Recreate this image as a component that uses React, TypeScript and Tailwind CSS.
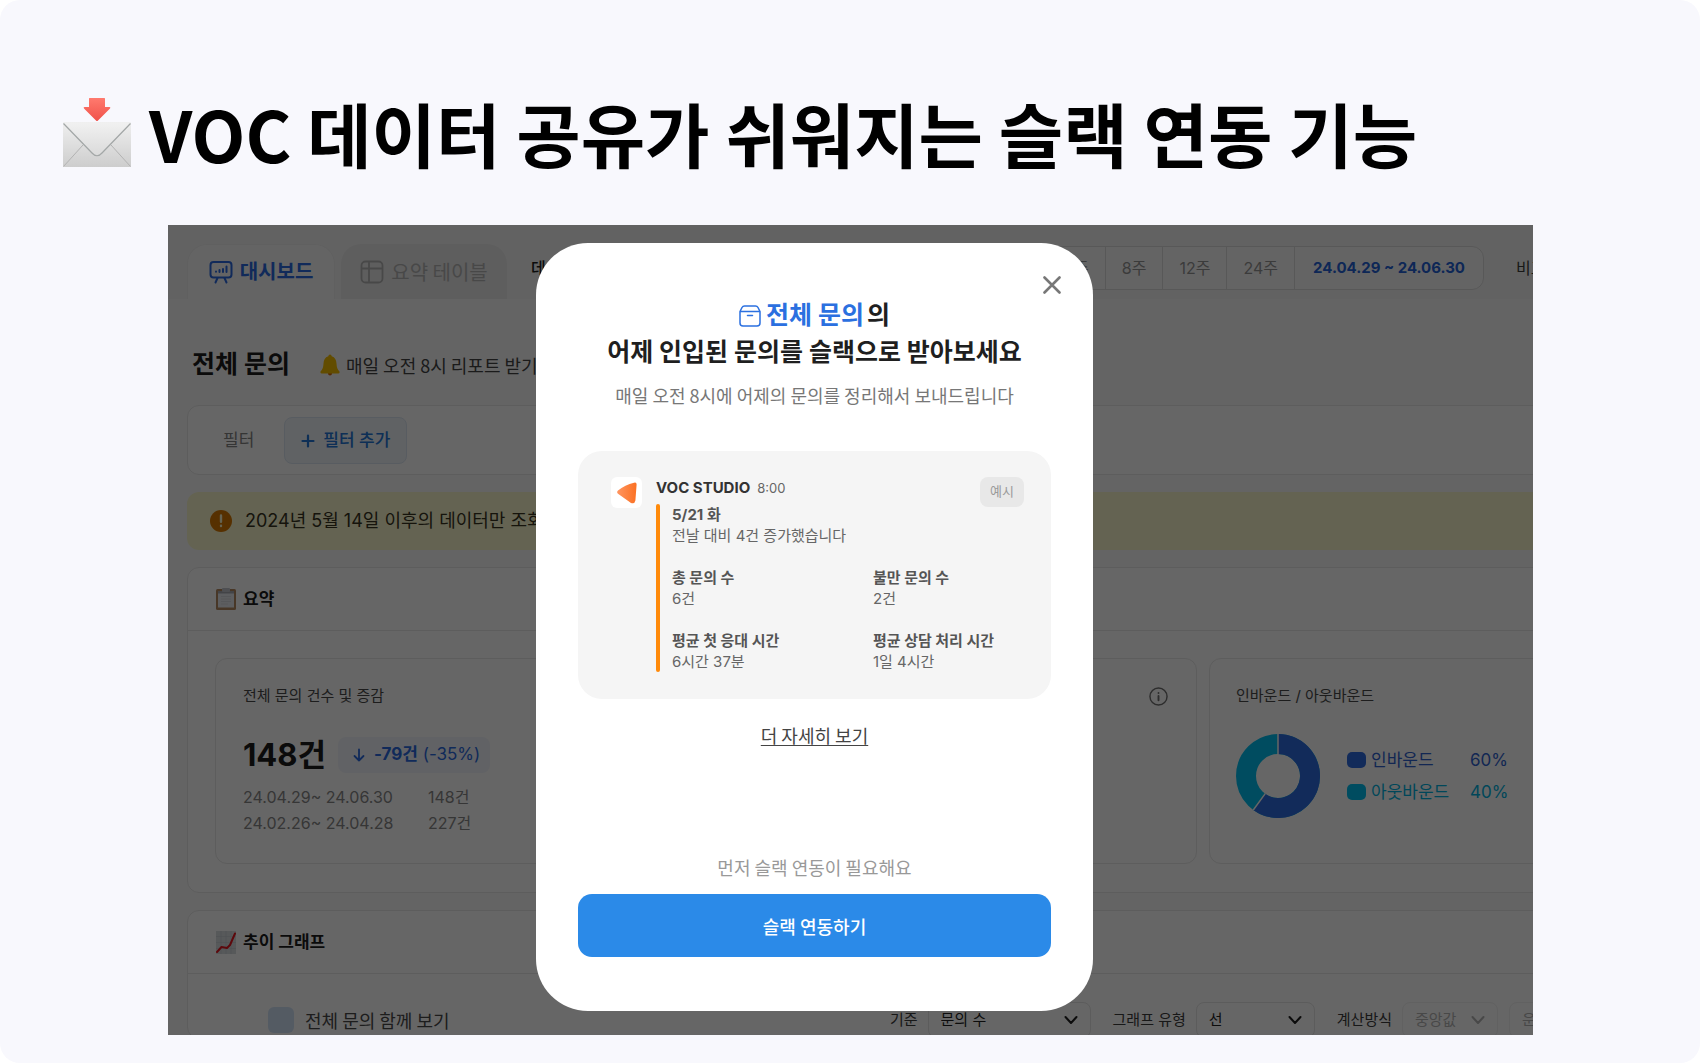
import type { ReactNode } from 'react';

const periods = ['4주', '8주', '12주', '24주'];

function InboxArrowIcon() {
  return (
    <svg viewBox="0 0 70 70" className="h-[70px] w-[70px] shrink-0" aria-hidden="true">
      <defs>
        <linearGradient id="paper" x1="0" y1="0" x2="0" y2="1">
          <stop offset="0" stopColor="#efefef" />
          <stop offset="1" stopColor="#cdcdcd" />
        </linearGradient>
        <linearGradient id="flap" x1="0" y1="0" x2="0" y2="1">
          <stop offset="0" stopColor="#f1f1f1" />
          <stop offset="1" stopColor="#dadada" />
        </linearGradient>
        <linearGradient id="arrow" x1="0" y1="0" x2="0" y2="1">
          <stop offset="0" stopColor="#ff7a6e" />
          <stop offset="1" stopColor="#f0524a" />
        </linearGradient>
      </defs>
      <rect x="1" y="24" width="68" height="45" rx="1" fill="url(#paper)" />
      <path d="M1.500 68.500 L21 47 M68.500 68.500 L49 47" stroke="#b3b3b3" strokeWidth="1" fill="none" />
      <path d="M1.500 24.500 H68.500 L40 55 Q35 60.500 30 55 Z" fill="url(#flap)" />
      <path d="M1.500 25.500 L30 55 Q35 60.500 40 55 L68.500 25.500" stroke="#a3a7a7" strokeWidth="1.200" fill="none" />
      <path d="M27.500 0 H42.500 Q43 0 43 1 V9 H47.500 Q49 9 48 10.500 L36 22.500 Q35 23.500 34 22.500 L22 10.500 Q21 9 22.500 9 H27 V1 Q27 0 27.500 0 Z" fill="url(#arrow)" />
    </svg>
  );
}

function BoardIcon() {
  return (
    <svg viewBox="0 0 24 24" className="h-6 w-6" fill="none" stroke="currentColor" strokeWidth="2" strokeLinecap="round" strokeLinejoin="round" aria-hidden="true">
      <rect x="1.500" y="2" width="21" height="15.500" rx="3" />
      <path d="M8.500 18 L6.500 22.500 M15.500 18 L17.500 22.500 M7 11.500 V11.800 M10.500 10 V12 M14 9 V12 M17.500 6.500 V12" />
    </svg>
  );
}

function TableIcon() {
  return (
    <svg viewBox="0 0 24 24" className="h-6 w-6" fill="none" stroke="currentColor" strokeWidth="1.800" aria-hidden="true">
      <rect x="1.500" y="1.500" width="21" height="21" rx="4" />
      <path d="M1.500 8.500 H22.500 M9 1.500 V22.500" />
    </svg>
  );
}

function BellIcon() {
  return (
    <svg viewBox="0 0 20 22" className="h-[22px] w-5" aria-hidden="true">
      <circle cx="10" cy="19.500" r="2" fill="#d46a10" />
      <path d="M10 .5 Q11.500 .5 11.700 2.300 C15 3.200 16.300 6 16.500 9.500 C16.700 13.500 17.500 15.300 19.500 17.500 Q20 19.600 18.500 19.600 H1.500 Q0 19.600 .5 17.500 C2.500 15.300 3.300 13.500 3.500 9.500 C3.700 6 5 3.200 8.300 2.300 Q8.500 .5 10 .5 Z" fill="#f5bd00" />
    </svg>
  );
}

function ClipboardEmoji() {
  return (
    <svg viewBox="0 0 20 22" className="h-[22px] w-5" aria-hidden="true">
      <rect x="0" y="1" width="20" height="21" rx="1.500" fill="#b58a62" />
      <rect x="2" y="3" width="16" height="16.500" fill="#e9ebef" />
      <path d="M2 3 H18 V5.500 H2 Z" fill="#a9abb2" />
      <rect x="6" y="0" width="8" height="4" rx="1" fill="#c4c6cc" />
      <path d="M5 8.500 H15 M5 11 H15 M5 13.500 H15 M5 16 H12" stroke="#d3d5da" strokeWidth=".8" />
    </svg>
  );
}

function ChartEmoji() {
  return (
    <svg viewBox="0 0 20 23" className="h-[23px] w-5" aria-hidden="true">
      <rect width="20" height="23" fill="#d9dfe2" />
      <path d="M0 5.500 H20 M0 11.500 H20 M0 17.500 H20 M5 0 V23 M10 0 V23 M15 0 V23" stroke="#c3cbd0" strokeWidth=".6" />
      <path d="M1 21 L5.500 16 L11 17 L14 14 L19 2.500" fill="none" stroke="#e8141f" strokeWidth="2" strokeLinecap="round" strokeLinejoin="round" />
    </svg>
  );
}

function BoxIcon() {
  return (
    <svg viewBox="0 0 22 22" className="h-[22px] w-[22px]" fill="none" stroke="currentColor" strokeWidth="1.500" strokeLinecap="round" strokeLinejoin="round" aria-hidden="true">
      <path d="M1 6.500 L3 2.500 Q3.800 1 5.500 1 H16.500 Q18.200 1 19 2.500 L21 6.500 V18 Q21 21 18 21 H4 Q1 21 1 18 Z M1 6.500 H21 M8.500 10.500 H13.500" />
    </svg>
  );
}

function ChevronIcon() {
  return (
    <svg viewBox="0 0 14 10" className="pointer-events-none h-2.5 w-3.5 shrink-0" fill="none" stroke="currentColor" strokeWidth="2" strokeLinecap="round" strokeLinejoin="round" aria-hidden="true">
      <path d="M1.500 2 L7 8 L12.500 2" />
    </svg>
  );
}

function Donut() {
  return (
    <svg viewBox="-42 -42 84 84" className="h-[84px] w-[84px] shrink-0" role="img" aria-label="인바운드 60%, 아웃바운드 40%">
      <circle r="32" fill="none" stroke="#00bfef" strokeWidth="20" />
      <path d="M0 -32 A32 32 0 1 1 -18.800 25.900" fill="none" stroke="#2f6be0" strokeWidth="20" />
      <path d="M0 -42 V-21.500 M-24.700 34 L-12.600 17.400" stroke="#ffffff" strokeWidth="1.500" />
    </svg>
  );
}

function SelectField({ id, label, value, box, muted }: { id: string; label?: string; value: string; box: string; muted?: boolean }) {
  return (
    <div className="flex items-center">
      {label && (
        <label htmlFor={id} className="mr-2.5 whitespace-nowrap text-[#3c3c3c]">
          {label}
        </label>
      )}
      <div className={`flex h-9 items-center rounded-lg border pr-3 pl-3 ${box} ${muted ? 'border-[#f2f2f2] text-[#b4b4b4]' : 'border-[#e6e6e6] text-[#1f1f1f]'}`}>
        <select id={id} aria-label={label ? undefined : value} disabled={muted} className="min-w-0 flex-1 appearance-none bg-transparent opacity-100 outline-none">
          <option>{value}</option>
        </select>
        <ChevronIcon />
      </div>
    </div>
  );
}

function SectionHeader({ icon, children }: { icon: ReactNode; children: ReactNode }) {
  return (
    <header className="flex h-[63px] items-center gap-[7px] border-b border-[#e8e8e8] px-7">
      {icon}
      <h3 className="pt-0.5 text-[17px] font-bold text-[#1c1c1c]">{children}</h3>
    </header>
  );
}

function Dashboard() {
  return (
    <div className="-mr-[189px] flex flex-col" aria-hidden="true">
      <div className="flex h-[74px] shrink-0 items-end bg-[#f6f6f6] pl-[19px]">
        <button className="flex h-[55px] w-[148px] items-center justify-center gap-[7px] rounded-t-[20px] border border-b-0 border-[#f0f0f0] bg-[#fbfbfb] text-xl font-bold text-[#2b6ae0]">
          <BoardIcon />
          대시보드
        </button>
        <button className="ml-1.5 flex h-[55px] w-[166px] items-center justify-center gap-[7px] rounded-t-[20px] bg-[#ebebeb] font-['Noto_Sans_CJK_KR',sans-serif] text-xl text-[#b5b5b5]">
          <TableIcon />
          요약 테이블
        </button>
        <span className="mb-[19px] ml-6 text-base font-medium text-[#1f1f1f]">데이터</span>
        <div className="mb-[9px] ml-auto flex h-11 items-stretch overflow-hidden rounded-xl border border-[#dcdcdc] bg-[#fbfbfb] text-base text-[#959595]">
          {periods.map((p) => (
            <button key={p} className="border-r border-[#dcdcdc] px-4">
              {p}
            </button>
          ))}
          <button className="px-[18px] text-[15px] font-bold text-[#2462d8]">24.04.29 ~ 24.06.30</button>
        </div>
        <span className="mb-[19px] ml-8 w-[206px] text-base text-[#3c3c3c]">비교</span>
      </div>

      <div className="flex flex-col gap-[17px] bg-[#fbfbfb] pl-[19px]">
        <div className="-mb-[17px] flex h-[106px] items-center pt-[26px] pl-[5px]">
          <h2 className="text-[25px] font-bold text-[#1c1c1c]">전체 문의</h2>
          <button className="ml-[30px] flex items-center gap-1.5 font-['Noto_Sans_CJK_KR',sans-serif] text-lg text-[#444444]">
            <BellIcon />
            매일 오전 8시 리포트 받기
          </button>
        </div>

        <div className="flex h-[70px] items-center rounded-xl border border-[#e8e8e8] bg-white pl-[35px] text-[17px]">
          <span className="pt-0.5 text-[#858585]">필터</span>
          <button className="ml-[30px] flex h-[47px] items-center gap-2 rounded-lg border border-[#dde7f3] bg-[#eff4fa] px-4 pt-0.5 font-medium text-[#2377d8]">
            <svg viewBox="0 0 14 14" className="h-3.5 w-3.5" stroke="currentColor" strokeWidth="2.200" strokeLinecap="round" aria-hidden="true">
              <path d="M7 1.500 V12.500 M1.500 7 H12.500" />
            </svg>
            필터 추가
          </button>
        </div>

        <div className="flex h-[58px] items-center gap-[13px] rounded-xl bg-[#f9f8cc] pl-[23px] text-lg text-[#38341f]">
          <svg viewBox="0 0 22 22" className="h-[22px] w-[22px]" aria-hidden="true">
            <circle cx="11" cy="11" r="11" fill="#d87800" />
            <path d="M11 5.500 V11.800 M11 15.800 V16" stroke="#f9f8cc" strokeWidth="2.400" strokeLinecap="round" />
          </svg>
          2024년 5월 14일 이후의 데이터만 조회할 수 있습니다
        </div>

        <section className="rounded-xl border border-[#e8e8e8] bg-white">
          <SectionHeader icon={<ClipboardEmoji />}>요약</SectionHeader>
          <div className="grid grid-cols-3 gap-3 px-[27px] pt-[27px] pb-7">
            <article className="h-[206px] rounded-xl border border-[#e8e8e8] px-[27px] pt-[26px]">
              <h4 className="text-[15px] leading-[22px] text-[#4a4a4a]">전체 문의 건수 및 증감</h4>
              <div className="mt-7 flex h-10 items-center gap-3">
                <strong className="text-[31px] font-bold text-[#1c1c1c]">148건</strong>
                <span className="flex h-9 items-center gap-2 rounded-lg bg-[#f3f6fc] pr-2.5 pl-3.5 text-[17px] text-[#2b6ae0]">
                  <svg viewBox="0 0 14 14" className="h-3.5 w-3.5" fill="none" stroke="currentColor" strokeWidth="1.800" strokeLinecap="round" strokeLinejoin="round" aria-hidden="true">
                    <path d="M7 1.500 V12.500 M2.500 8 L7 12.500 L11.500 8" />
                  </svg>
                  <span>
                    <b>-79건</b> (-35%)
                  </span>
                </span>
              </div>
              <dl className="mt-[9px] grid grid-cols-[185px_1fr] text-base leading-[26px] text-[#888888]">
                <dt>24.04.29~ 24.06.30</dt>
                <dd>148건</dd>
                <dt>24.02.26~ 24.04.28</dt>
                <dd>227건</dd>
              </dl>
            </article>
            <article className="flex h-[206px] items-start justify-end rounded-xl border border-[#e8e8e8] px-[28px] pt-[28px]">
              <svg viewBox="0 0 20 20" className="h-[19px] w-[19px] text-[#707070]" fill="none" stroke="currentColor" strokeWidth="1.500" strokeLinecap="round" aria-hidden="true">
                <circle cx="10" cy="10" r="9" />
                <path d="M10 9.500 V14 M10 6.200 V6.300" strokeWidth="2" />
              </svg>
            </article>
            <article className="h-[206px] rounded-xl border border-[#e8e8e8] px-[26px] pt-[26px]">
              <h4 className="text-[15px] leading-[22px] text-[#4a4a4a]">인바운드 / 아웃바운드</h4>
              <div className="mt-[27px] flex items-center gap-[27px]">
                <Donut />
                <dl className="grid grid-cols-[123px_auto] text-[17px] leading-8">
                  <dt className="flex items-center gap-[5px] text-[#2f62d0]">
                    <i className="h-4 w-[19px] rounded-[5px] bg-[#2f6be0]" />
                    인바운드
                  </dt>
                  <dd className="text-[#2f62d0]">60%</dd>
                  <dt className="flex items-center gap-[5px] text-[#00b2e0]">
                    <i className="h-4 w-[19px] rounded-[5px] bg-[#00bfef]" />
                    아웃바운드
                  </dt>
                  <dd className="text-[#00b2e0]">40%</dd>
                </dl>
              </div>
            </article>
          </div>
        </section>

        <section className="rounded-xl border border-[#e8e8e8] bg-white">
          <SectionHeader icon={<ChartEmoji />}>추이 그래프</SectionHeader>
          <div className="flex items-center pt-7 pr-7 pl-20">
            <label className="flex items-center gap-[11px] font-['Noto_Sans_CJK_KR',sans-serif] text-lg text-[#4a4a4a]">
              <input type="checkbox" className="h-[26px] w-[26px] appearance-none rounded-md bg-[#d3e3f8]" />
              전체 문의 함께 보기
            </label>
            <div className="ml-auto flex items-center text-[15px]">
              <SelectField id="metric" label="기준" value="문의 수" box="mr-[22px] w-[163px]" />
              <SelectField id="chart" label="그래프 유형" value="선" box="mr-[22px] w-[119px]" />
              <SelectField id="method" label="계산방식" value="중앙값" box="mr-[11px] w-24" muted />
              <SelectField id="hours" value="운영 시간" box="w-[184px]" muted />
            </div>
          </div>
        </section>
      </div>
    </div>
  );
}

function Stat({ title, value }: { title: string; value: string }) {
  return (
    <div>
      <p className="font-bold text-[#555555]">{title}</p>
      <p>{value}</p>
    </div>
  );
}

function SlackDialog() {
  return (
    <div role="dialog" aria-modal="true" aria-labelledby="dialog-title" className="relative w-[557px] rounded-[52px] bg-white px-[42px] pt-[54px] pb-[54px] text-center font-['Noto_Sans_CJK_KR',sans-serif]">
      <button aria-label="닫기" className="absolute top-[33px] right-8 text-[#777777]">
        <svg viewBox="0 0 18 18" className="h-[18px] w-[18px]" stroke="currentColor" strokeWidth="2.600" strokeLinecap="round" aria-hidden="true">
          <path d="M1.500 1.500 L16.500 16.500 M16.500 1.500 L1.500 16.500" />
        </svg>
      </button>
      <h2 id="dialog-title" className="font-[Inter,'Noto_Sans_CJK_KR',sans-serif] text-[25px] leading-[37px] font-bold text-[#1f1f1f]">
        <span className="flex items-center justify-center">
          <span className="mr-[3px] flex items-center gap-[5px] text-[#2b70e0]">
            <BoxIcon />
            전체 문의
          </span>
          의
        </span>
        어제 인입된 문의를 슬랙으로 받아보세요
      </h2>
      <p className="mt-2.5 text-lg leading-7 text-[#777777]">매일 오전 8시에 어제의 문의를 정리해서 보내드립니다</p>

      <div className="relative mt-[42px] flex items-start gap-3.5 rounded-3xl bg-[#f5f5f5] pt-[26px] pr-6 pb-[27px] pl-[33px] text-left font-[Inter,'Noto_Sans_CJK_KR',sans-serif]">
        <span className="flex h-[31px] w-[31px] shrink-0 items-center justify-center rounded-md bg-white">
          <svg viewBox="0 0 20 22" className="h-[22px] w-5" aria-hidden="true">
            <defs>
              <linearGradient id="play" x1="0" y1="0" x2="1" y2="0">
                <stop offset="0" stopColor="#ff9560" />
                <stop offset="1" stopColor="#fb7022" />
              </linearGradient>
            </defs>
            <path d="M17 .8 Q19.600 0 19.600 2.500 L18.400 18.500 Q17.600 22.300 14 21 L1 11.800 Q-.7 10.200 1 8.600 Q8 3 17 .8 Z" fill="url(#play)" />
          </svg>
        </span>
        <div className="min-w-0 flex-1">
          <p className="flex h-[22px] items-center gap-[7px] text-[15px] font-bold text-[#333333]">
            VOC STUDIO
            <span className="pt-0.5 text-[13px] font-normal text-[#666666]">8:00</span>
          </p>
          <div className="mt-[5px] flex gap-3">
            <span className="w-1 rounded-full bg-[#ff8a0a]" />
            <div className="grid flex-1 grid-cols-[201px_1fr] gap-y-[21px] text-[15px] leading-[21px] whitespace-nowrap text-[#666666]">
              <div className="col-span-2">
                <Stat title="5/21 화" value="전날 대비 4건 증가했습니다" />
              </div>
              <Stat title="총 문의 수" value="6건" />
              <Stat title="불만 문의 수" value="2건" />
              <Stat title="평균 첫 응대 시간" value="6시간 37분" />
              <Stat title="평균 상담 처리 시간" value="1일 4시간" />
            </div>
          </div>
        </div>
        <span className="absolute top-[26px] right-[27px] flex h-[30px] items-center rounded-lg bg-[#e8e8e8] px-2.5 text-[13px] text-[#9a9a9a]">예시</span>
      </div>

      <a href="#detail" className="mt-[22px] inline-block text-lg leading-7 text-[#444444] underline underline-offset-2">
        더 자세히 보기
      </a>
      <p className="mt-[104px] text-lg leading-7 text-[#999999]">먼저 슬랙 연동이 필요해요</p>
      <button className="mt-[13px] h-[63px] w-full rounded-[14px] bg-[#2b8ae8] text-lg font-medium text-white">슬랙 연동하기</button>
    </div>
  );
}

export default function App() {
  return (
    <div className="h-screen bg-white font-[Inter,'Noto_Sans_CJK_KR',sans-serif]">
      <main className="flex h-full flex-col rounded-[20px] bg-[#f8f8fd] pb-7">
        <h1 className="flex h-[225px] shrink-0 items-center gap-[17px] pt-10 pl-[62px] font-['Noto_Sans_CJK_KR',sans-serif] text-[70px] font-bold whitespace-nowrap text-black">
          <InboxArrowIcon />
          VOC 데이터 공유가 쉬워지는 슬랙 연동 기능
        </h1>
        <div className="relative mr-[167px] ml-[168px] min-h-0 flex-1 overflow-hidden bg-[#fbfbfb]">
          <Dashboard />
          <div className="absolute inset-0 flex items-start bg-black/60 pt-[18px] pl-[368px]">
            <SlackDialog />
          </div>
        </div>
      </main>
    </div>
  );
}
